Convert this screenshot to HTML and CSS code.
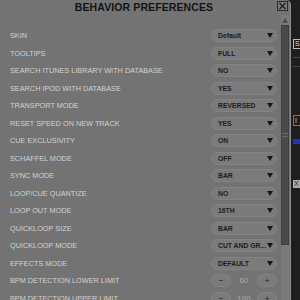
FILE: index.html
```html
<!DOCTYPE html>
<html>
<head>
<meta charset="utf-8">
<link rel="stylesheet" href="styles.css">
</head>
<body>
<div class="app">
  <div class="panel">
    <div class="header">
      <div class="title">BEHAVIOR PREFERENCES</div>
      <div class="close"><svg width="9" height="8" viewBox="0 0 9 8"><path d="M1.5 1 L7.5 7 M7.5 1 L1.5 7" stroke="#1a1a1a" stroke-width="1.2"/></svg></div>
    </div>
    <div class="content">
      <div class="list">
        <div class="row"><span class="label">SKIN</span><div class="select"><span>Default</span><i class="tri"></i></div></div>
        <div class="row"><span class="label">TOOLTIPS</span><div class="select"><span>FULL</span><i class="tri"></i></div></div>
        <div class="row"><span class="label">SEARCH ITUNES LIBRARY WITH DATABASE</span><div class="select"><span>NO</span><i class="tri"></i></div></div>
        <div class="row"><span class="label">SEARCH IPOD WITH DATABASE</span><div class="select"><span>YES</span><i class="tri"></i></div></div>
        <div class="row"><span class="label">TRANSPORT MODE</span><div class="select"><span>REVERSED</span><i class="tri"></i></div></div>
        <div class="row"><span class="label">RESET SPEED ON NEW TRACK</span><div class="select"><span>YES</span><i class="tri"></i></div></div>
        <div class="row"><span class="label">CUE EXCLUSIVITY</span><div class="select"><span>ON</span><i class="tri"></i></div></div>
        <div class="row"><span class="label">SCHAFFEL MODE</span><div class="select"><span>OFF</span><i class="tri"></i></div></div>
        <div class="row"><span class="label">SYNC MODE</span><div class="select"><span>BAR</span><i class="tri"></i></div></div>
        <div class="row"><span class="label">LOOP/CUE QUANTIZE</span><div class="select"><span>NO</span><i class="tri"></i></div></div>
        <div class="row"><span class="label">LOOP OUT MODE</span><div class="select"><span>16TH</span><i class="tri"></i></div></div>
        <div class="row"><span class="label">QUICKLOOP SIZE</span><div class="select"><span>BAR</span><i class="tri"></i></div></div>
        <div class="row"><span class="label">QUICKLOOP MODE</span><div class="select"><span>CUT AND GR...</span><i class="tri"></i></div></div>
        <div class="row"><span class="label">EFFECTS MODE</span><div class="select"><span>DEFAULT</span><i class="tri"></i></div></div>
        <div class="row"><span class="label">BPM DETECTION LOWER LIMIT</span><div class="stepper"><span class="btn">−</span><span class="val">60</span><span class="btn">+</span></div></div>
        <div class="row"><span class="label">BPM DETECTION UPPER LIMIT</span><div class="stepper"><span class="btn">−</span><span class="val">180</span><span class="btn">+</span></div></div>
      </div>
      <div class="scrollbar">
        <div class="arrow"><i class="up"></i></div>
        <div class="thumb"><span class="grip"></span><span class="grip"></span></div>
        <div class="track"></div>
      </div>
    </div>
  </div>
  <div class="behind">
    <div class="b-top"></div>
    <div class="b-box">S</div>
    <div class="b-line"></div>
    <div class="b-line"></div>
    <div class="b-gap"></div>
    <div class="b-box2">I</div>
    <div class="b-blue"></div>
    <div class="b-gap2"></div>
    <div class="b-box3">X</div>
  </div>
</div>
</body>
</html>
```
FILE: styles.css
```css
html, body {
  margin: 0;
  padding: 0;
}
body {
  width: 300px;
  height: 300px;
  overflow: hidden;
  background: #202020;
  font-family: "Liberation Sans", Arial, sans-serif;
}
.app {
  display: flex;
  width: 300px;
  height: 300px;
}
.panel {
  width: 290px;
  height: 300px;
  background: #737373;
  border-right: 1px solid #8c8c8c;
  border-top-right-radius: 5px;
  display: flex;
  flex-direction: column;
  overflow: hidden;
}
.header {
  height: 15px;
  display: flex;
  align-items: center;
  justify-content: center;
  position: relative;
  flex: none;
}
.title {
  font-weight: bold;
  font-size: 10.5px;
  color: #141414;
  letter-spacing: 0.1px;
  margin-top: -2px;
  margin-left: -2px;
}
.close {
  position: absolute;
  left: 277px;
  top: 1px;
  width: 9px;
  height: 8px;
  border: 1px solid #2a2a2a;
  background: #7c7c7c;
  display: flex;
}
.content {
  flex: 1;
  display: flex;
  min-height: 0;
}
.list {
  flex: 1;
  padding-top: 12px;
}
.row {
  height: 17.5px;
  display: flex;
  align-items: center;
  justify-content: space-between;
  padding-left: 10px;
  padding-right: 4px;
}
.label {
  font-size: 7.3px;
  color: #d2d2d2;
  white-space: nowrap;
}
.select {
  width: 66px;
  height: 13px;
  box-sizing: border-box;
  border-radius: 7px;
  background: #7b7b7b;
  border: 1px solid #838383;
  display: flex;
  align-items: center;
  justify-content: space-between;
  padding: 0 3px 0 6px;
  font-size: 6.8px;
  font-weight: bold;
  color: #1c1c1c;
  white-space: nowrap;
  flex: none;
}
.tri {
  width: 0;
  height: 0;
  flex: none;
  border-left: 3.5px solid transparent;
  border-right: 3.5px solid transparent;
  border-top: 5px solid #151515;
}
.stepper {
  width: 66px;
  height: 13px;
  display: flex;
  align-items: center;
  justify-content: space-between;
  flex: none;
}
.btn {
  width: 20px;
  height: 13px;
  box-sizing: border-box;
  border-radius: 7px;
  background: #7b7b7b;
  border: 1px solid #838383;
  display: flex;
  align-items: center;
  justify-content: center;
  font-size: 8px;
  color: #1c1c1c;
}
.val {
  font-size: 8px;
  color: #a9a9a9;
}
.scrollbar {
  width: 8px;
  margin-right: 1px;
  display: flex;
  flex-direction: column;
}
.arrow {
  height: 10px;
  display: flex;
  justify-content: center;
  align-items: center;
  background: #7b7b7b;
}
.up {
  width: 0;
  height: 0;
  border-left: 3.5px solid transparent;
  border-right: 3.5px solid transparent;
  border-bottom: 5px solid #4e4e4e;
}
.thumb {
  height: 220px;
  background: #4a4a4a;
  border: 1px solid #3c3c3c;
  box-sizing: border-box;
  display: flex;
  flex-direction: column;
  align-items: center;
  justify-content: center;
  gap: 2px;
}
.grip {
  width: 6px;
  height: 1px;
  background: #6a6a6a;
}
.track {
  flex: 1;
  background: #7a7a7a;
}
.behind {
  flex: 1;
  background: #1e1e1e;
  display: flex;
  flex-direction: column;
  padding-left: 2px;
}
.b-top { height: 39px; }
.b-box {
  height: 8px;
  border: 1px solid #bbb;
  border-right: none;
  font-size: 7px;
  line-height: 8px;
  color: #ddd;
  padding-left: 1px;
}
.b-line {
  height: 1px;
  margin-top: 8px;
  background: #444;
}
.b-gap { height: 48px; }
.b-box2 {
  height: 9px;
  border: 1px solid #777;
  border-right: none;
  font-size: 7px;
  line-height: 9px;
  color: #ccc;
  padding-left: 1px;
}
.b-blue {
  height: 5px;
  margin-top: 13px;
  background: #2233bb;
}
.b-gap2 { height: 36px; }
.b-box3 {
  height: 8px;
  background: #aaa;
  font-size: 7px;
  line-height: 8px;
  color: #222;
  padding-left: 1px;
}
```
